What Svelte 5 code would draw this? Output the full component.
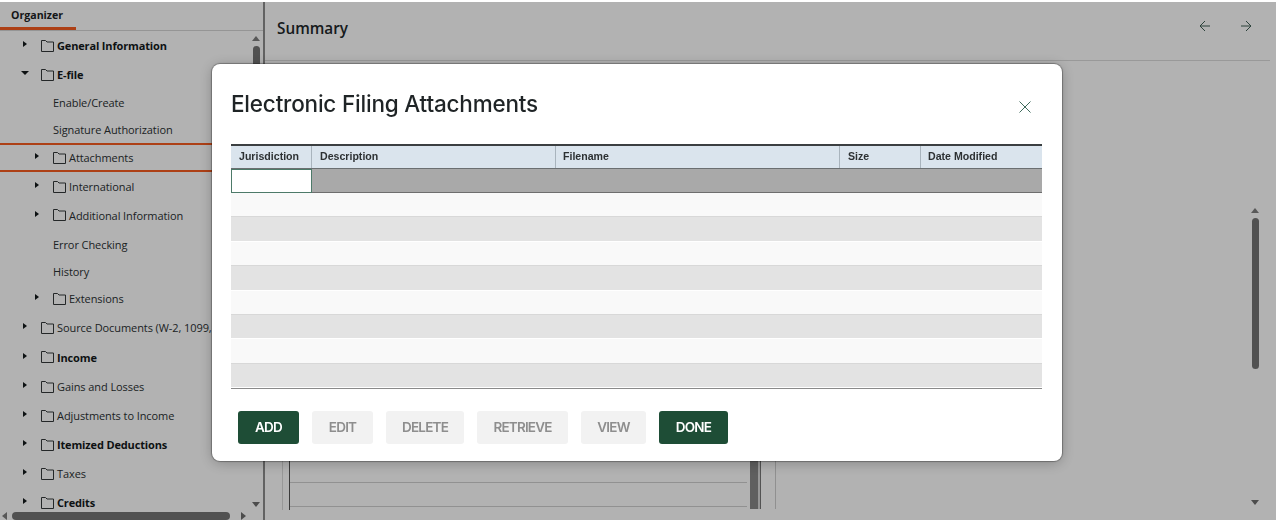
<script>
  const tree = [
    { label: 'General Information', bold: true, arrow: 'right', folder: true },
    { label: 'E-file', bold: true, arrow: 'down', folder: true },
    { label: 'Enable/Create', leaf: true, h: 26 },
    { label: 'Signature Authorization', leaf: true },
    { label: 'Attachments', arrow: 'right', folder: true, nested: true, lift: true, selected: true },
    { label: 'International', arrow: 'right', folder: true, nested: true, lift: true },
    { label: 'Additional Information', arrow: 'right', folder: true, nested: true, lift: true, h: 28 },
    { label: 'Error Checking', leaf: true, h: 28 },
    { label: 'History', leaf: true, h: 26 },
    { label: 'Extensions', arrow: 'right', folder: true, nested: true },
    { label: 'Source Documents (W-2, 1099, etc.)', arrow: 'right', folder: true },
    { label: 'Income', bold: true, arrow: 'right', folder: true, h: 30 },
    { label: 'Gains and Losses', arrow: 'right', folder: true },
    { label: 'Adjustments to Income', arrow: 'right', folder: true },
    { label: 'Itemized Deductions', bold: true, arrow: 'right', folder: true },
    { label: 'Taxes', arrow: 'right', folder: true },
    { label: 'Credits', bold: true, arrow: 'right', folder: true }
  ];

  const columns = [
    { label: 'Jurisdiction', width: 81, pad: 8 },
    { label: 'Description', width: 244, pad: 8 },
    { label: 'Filename', width: 284, pad: 7 },
    { label: 'Size', width: 81, pad: 8 },
    { label: 'Date Modified', width: 121, pad: 7 }
  ];

  const buttons = [
    { label: 'ADD', width: 61, primary: true },
    { label: 'EDIT', width: 61 },
    { label: 'DELETE', width: 78 },
    { label: 'RETRIEVE', width: 91 },
    { label: 'VIEW', width: 65 },
    { label: 'DONE', width: 69, primary: true }
  ];

  const blankRows = [0, 1, 2, 3, 4, 5, 6, 7];
</script>

<div class="page">
  <aside class="organizer">
    <div class="tab-bar"><span class="tab">Organizer</span></div>
    <div class="tree">
      {#each tree as item}
        <div
          class="row"
          class:leaf={item.leaf}
          class:nested={item.nested}
          class:lift={item.lift}
          class:selected={item.selected}
          class:bold={item.bold}
          style:height={item.h ? `${item.h}px` : null}
        >
          {#if item.arrow}
            <span class="arrow {item.arrow}"></span>
          {/if}
          {#if item.folder}
            <svg class="folder" width="13" height="12" viewBox="0 0 13 12" fill="none">
              <path d="M.5 11.5V.5h4L6 2h6.500v9.500z" stroke="#34383a" />
            </svg>
          {/if}
          <span class="label">{item.label}</span>
        </div>
      {/each}
    </div>
    <div class="tree-scroll-v">
      <span class="tri up"></span>
      <span class="thumb"></span>
      <span class="tri dn"></span>
    </div>
    <div class="tree-scroll-h">
      <span class="tri lf"></span>
      <span class="hthumb"></span>
      <span class="tri rt"></span>
    </div>
  </aside>

  <main class="content">
    <header class="summary">
      <h2>Summary</h2>
      <div class="nav">
        <svg width="12" height="12" viewBox="0 0 12 12" fill="none" stroke="#3f5f55">
          <path d="M11 6H1M6 1 1 6l5 5" />
        </svg>
        <svg width="12" height="12" viewBox="0 0 12 12" fill="none" stroke="#3f5f55">
          <path d="M1 6h10M6 1l5 5-5 5" />
        </svg>
      </div>
    </header>
    <div class="under-table">
      <div class="under-row first"></div>
      <div class="under-row"></div>
    </div>
    <div class="under-bar"></div>
    <div class="page-scroll">
      <span class="tri up"></span>
      <span class="thumb"></span>
      <span class="spacer"></span>
      <span class="tri dn"></span>
    </div>
  </main>
</div>

<div class="overlay"></div>

<div class="modal" role="dialog" aria-label="Electronic Filing Attachments">
  <div class="modal-head">
    <h1>Electronic Filing Attachments</h1>
    <svg class="close" width="12" height="12" viewBox="0 0 12 12" fill="none" stroke="#3f6b5c">
      <path d="M.5.500l11 11M11.500.500l-11 11" />
    </svg>
  </div>

  <div class="grid">
    <div class="grid-head">
      {#each columns as col}
        <div class="th" style:width="{col.width}px" style:padding-left="{col.pad}px">{col.label}</div>
      {/each}
    </div>
    <div class="grid-selected">
      <div class="cell-edit"></div>
    </div>
    {#each blankRows as r}
      <div class="grid-row" class:alt={r % 2 === 1}></div>
    {/each}
  </div>

  <div class="actions">
    {#each buttons as b}
      <button type="button" class:primary={b.primary} disabled={!b.primary} style:width="{b.width}px">{b.label}</button>
    {/each}
  </div>
</div>

<style>
  :global(body) {
    margin: 0;
    background: #fff;
    overflow: hidden;
  }

  .page {
    display: flex;
    width: 1276px;
    height: 518px;
    margin-top: 2px;
    overflow: hidden;
    font-family: "Open Sans", "Noto Sans", sans-serif;
    color: #22282a;
  }

  .organizer {
    position: relative;
    flex: none;
    width: 263px;
    border-right: 2px solid #8d8d8d;
    overflow: hidden;
  }

  .tab-bar {
    height: 28px;
    border-bottom: 1px solid #d6d6d6;
  }

  .tab {
    display: inline-block;
    width: 76px;
    height: 28px;
    box-sizing: border-box;
    padding: 6px 0 0 11px;
    border-bottom: 3px solid #f85c20;
    font-size: 10.6px;
    line-height: 14px;
    font-weight: 700;
    color: #1c2225;
  }

  .tree {
    margin-top: -1px;
  }

  .row {
    display: flex;
    align-items: center;
    height: 29px;
    box-sizing: border-box;
    padding-top: 2px;
    padding-left: 22px;
    font-size: 11px;
    letter-spacing: -0.08px;
    white-space: nowrap;
    color: #2b3133;
  }

  .row.nested {
    padding-left: 34px;
  }

  .row.leaf {
    padding-left: 53px;
  }

  .row.lift {
    padding-bottom: 2px;
  }

  .row.selected {
    border-top: 2px solid #f85c20;
    border-bottom: 2px solid #f85c20;
  }

  .row.bold {
    font-weight: 700;
    letter-spacing: -0.15px;
    color: #14191b;
  }

  .arrow {
    flex: none;
    width: 0;
    height: 0;
    margin-top: -3px;
  }

  .arrow.right {
    border-left: 4px solid #14191b;
    border-top: 3.5px solid transparent;
    border-bottom: 3.5px solid transparent;
    margin-left: 1px;
    margin-right: 14px;
  }

  .arrow.down {
    border-top: 4px solid #14191b;
    border-left: 4px solid transparent;
    border-right: 4px solid transparent;
    margin-left: -1px;
    margin-right: 12px;
  }

  .folder {
    flex: none;
    margin-right: 3px;
  }

  .tree-scroll-v {
    position: absolute;
    top: 34px;
    right: 1px;
    bottom: 13px;
    width: 12px;
    display: flex;
    flex-direction: column;
    align-items: center;
    justify-content: space-between;
  }

  .tree-scroll-v .thumb {
    position: absolute;
    top: 10px;
    width: 7px;
    height: 60px;
    border-radius: 4px;
    background: #757575;
  }

  .tree-scroll-h {
    position: absolute;
    left: 0;
    right: 0;
    bottom: 0;
    height: 8px;
  }

  .hthumb {
    position: absolute;
    left: 12px;
    top: 0;
    width: 218px;
    height: 8px;
    border-radius: 4px;
    background: #757575;
  }

  .tri {
    display: block;
    width: 0;
    height: 0;
    border: 4px solid transparent;
  }

  .tri.up {
    border-top: 0;
    border-bottom: 5px solid #7f7f7f;
  }

  .tri.dn {
    border-bottom: 0;
    border-top: 5px solid #6d6d6d;
  }

  .tri.lf {
    position: absolute;
    left: 2px;
    top: 0;
    border-left: 0;
    border-right: 5px solid #7f7f7f;
  }

  .tri.rt {
    position: absolute;
    left: 241px;
    top: 0;
    border-right: 0;
    border-left: 5px solid #6d6d6d;
  }

  .content {
    position: relative;
    flex: 1;
    min-width: 0;
  }

  .summary {
    display: flex;
    align-items: center;
    justify-content: space-between;
    height: 52px;
    margin-right: 6px;
    padding: 0 18px 6px 12px;
    border-bottom: 1px solid #dcdcdc;
  }

  .summary h2 {
    margin: 0;
    font-size: 15.3px;
    font-weight: 600;
    color: #22282a;
  }

  .nav {
    display: flex;
    gap: 29px;
    margin-top: -4px;
  }

  .under-table {
    position: absolute;
    left: 24px;
    top: 440px;
    width: 457px;
    height: 68px;
    border-left: 1px solid #555;
  }

  .under-table::before {
    content: "";
    position: absolute;
    left: -8px;
    top: 0;
    height: 68px;
    border-left: 1px solid #dadada;
  }

  .under-row {
    height: 23px;
    border-bottom: 1px solid #d0d0d0;
  }

  .under-row.first {
    height: 40px;
  }

  .under-bar {
    position: absolute;
    left: 485px;
    top: 440px;
    width: 26px;
    height: 67px;
    box-sizing: border-box;
    border-right: 1px solid #cfcfcf;
  }

  .under-bar::before {
    content: "";
    position: absolute;
    left: 0;
    top: 0;
    width: 8px;
    height: 67px;
    background: #888;
    border-right: 2px solid #d8d8d8;
  }

  .under-bar::after {
    content: "";
    position: absolute;
    left: 10px;
    top: 0;
    width: 1px;
    height: 67px;
    background: #777;
  }

  .page-scroll {
    position: absolute;
    top: 206px;
    right: 16px;
    bottom: 15px;
    width: 10px;
    display: flex;
    flex-direction: column;
    align-items: center;
  }

  .page-scroll .thumb {
    width: 7px;
    height: 151px;
    margin-top: 5px;
    border-radius: 4px;
    background: #757575;
  }

  .page-scroll .spacer {
    flex: 1;
  }

  .overlay {
    position: fixed;
    left: 0;
    top: 2px;
    width: 1276px;
    height: 518px;
    background: rgba(0, 0, 0, 0.3);
  }

  .modal {
    position: fixed;
    left: 212px;
    top: 64px;
    width: 850px;
    height: 397px;
    box-sizing: border-box;
    padding: 0 19px;
    background: #fff;
    border-radius: 8px;
    box-shadow: 0 0 1px 1px rgba(0, 0, 0, 0.3), 0 2px 14px rgba(0, 0, 0, 0.25);
    font-family: "Liberation Sans", Arial, sans-serif;
  }

  .modal-head {
    position: relative;
    height: 80px;
  }

  .modal-head h1 {
    margin: 0;
    padding-top: 25px;
    font-family: Inter, sans-serif;
    font-size: 22.500px;
    line-height: 30px;
    font-weight: 500;
    letter-spacing: -0.2px;
    color: #1f2426;
  }

  .close {
    position: absolute;
    right: 12px;
    top: 37px;
  }

  .grid {
    width: 811px;
    border-bottom: 1px solid #8a8a8a;
  }

  .grid-head {
    display: flex;
    height: 25px;
    box-sizing: border-box;
    border-top: 2px solid #3b3f41;
    border-bottom: 1px solid #6b6f71;
    background: #dae4ed;
  }

  .th {
    box-sizing: border-box;
    border-right: 1px solid #a9b4bd;
    font-size: 10.600px;
    font-weight: 700;
    line-height: 21px;
    color: #2d3133;
  }

  .th:last-child {
    border-right: 0;
  }

  .grid-selected {
    height: 24px;
    box-sizing: border-box;
    background: #a9a9a9;
    border-bottom: 1px solid #6e6e6e;
  }

  .cell-edit {
    width: 81px;
    height: 24px;
    box-sizing: border-box;
    border: 1px solid #4d7a69;
    background: #fff;
  }

  .grid-row {
    height: 24.400px;
    box-sizing: border-box;
    background: #f9f9f9;
    border-bottom: 1px solid #d8d8d8;
  }

  .grid-row.alt {
    background: #e3e3e3;
    border-bottom-color: #fff;
  }

  .actions {
    display: flex;
    gap: 13px;
    margin-top: 22px;
    padding-left: 7px;
  }

  button {
    flex: none;
    height: 33px;
    padding: 0 0 2px;
    border: 0;
    border-radius: 3px;
    background: #f2f2f2;
    color: #8e8e8e;
    font-family: Inter, sans-serif;
    font-size: 13.500px;
    font-weight: 600;
    letter-spacing: -0.8px;
  }

  button.primary {
    background: #1e4d36;
    color: #fff;
  }
</style>
